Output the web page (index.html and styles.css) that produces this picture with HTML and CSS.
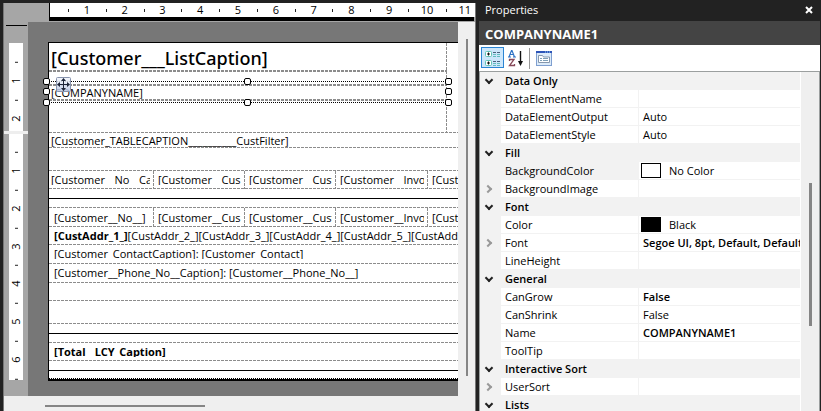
FILE: index.html
```html
<!DOCTYPE html>
<html lang="en">
<head>
<meta charset="utf-8">
<title>Report Designer</title>
<link rel="stylesheet" href="styles.css">
</head>
<body>
<main class="designer">
  <div class="ruler-top">
    <div class="ruler-scale">
      <span>1</span><span>2</span><span>3</span><span>4</span><span>5</span><span>6</span><span>7</span><span>8</span><span>9</span><span>10</span><span>11</span>
    </div>
  </div>
  <div class="workspace">
    <div class="ruler-side">
      <div class="side-scale side-header"><span>1</span><span>2</span></div>
      <div class="side-split"></div>
      <div class="side-scale side-body"><span>1</span><span>2</span><span>3</span><span>4</span><span>5</span><span>6</span><span></span></div>
    </div>
    <div class="canvas">
      <div class="page">
        <section class="page-header">
          <div class="header-area">
            <h1 class="title">[Customer___ListCaption]</h1>
            <div class="selected">
              <span class="text">[COMPANYNAME]</span>
              <i class="handle top left"></i><i class="handle top center"></i><i class="handle top right"></i>
              <i class="handle middle left"></i><i class="handle middle right"></i>
              <i class="handle bottom left"></i><i class="handle bottom center"></i><i class="handle bottom right"></i>
              <svg class="move" viewBox="0 0 15 15"><defs><linearGradient id="mg" x2="0" y2="1"><stop offset="0" stop-color="#f4f7fd"/><stop offset="1" stop-color="#b9c6e4"/></linearGradient></defs><rect x=".5" y=".5" width="14" height="14" rx="1" fill="url(#mg)" fill-opacity=".85" stroke="#8793ad"/><path d="M7.500 2v11M2 7.500h11" stroke="#1c2438"/><path d="M7.500 1 10 4H5zM7.500 14 10 11H5zM1 7.500 4 5v5zM14 7.500 11 5v5z" fill="#1c2438"/></svg>
            </div>
          </div>
        </section>
        <section class="page-body">
          <div class="band band-filter">[Customer_TABLECAPTION__________CustFilter]</div>
          <div class="band tall"></div>
          <div class="band cells captions">
            <div><span>[Customer__No__Ca</span></div><div><span>[Customer__Cus</span></div><div><span>[Customer__Cust</span></div><div><span>[Customer__Invo</span></div><div><span>[Customer</span></div>
          </div>
          <div class="band rule"><hr></div>
          <div class="band cells details">
            <div><span>[Customer__No__]</span></div><div><span>[Customer__Cus</span></div><div><span>[Customer__Cust</span></div><div><span>[Customer__Invo</span></div><div><span>[Customer</span></div>
          </div>
          <div class="band line short"><b>[CustAddr_1_]</b>[CustAddr_2_][CustAddr_3_][CustAddr_4_][CustAddr_5_][CustAddr_6_]</div>
          <div class="band line"><span class="clip">[Customer_ContactCaption]: [Customer_Contact]</span></div>
          <div class="band line">[Customer__Phone_No__Caption]: [Customer__Phone_No__]</div>
          <div class="band short"></div>
          <div class="band tall"></div>
          <div class="band rule"><hr></div>
          <div class="band line short"><b class="clip">[Total__LCY_Caption]</b></div>
          <div class="band rule last"><hr></div>
        </section>
      </div>
    </div>
    <div class="scroll-y"><div class="thumb"></div></div>
  </div>
  <div class="scroll-x"><div class="thumb"></div></div>
</main>

<aside class="properties">
  <header class="panel-title">
    <span>Properties</span>
    <button class="close" aria-label="Close"><svg viewBox="0 0 8 8"><path d="M1 1l6 6M7 1L1 7" stroke="#fff" stroke-width="2"/></svg></button>
  </header>
  <h2 class="object-name">COMPANYNAME1</h2>
  <div class="toolbar">
    <button class="tool active" aria-label="Categorized">
      <svg viewBox="0 0 18 18"><g fill="#fff" stroke="#62c4b4"><rect x="1.500" y="2.500" width="6" height="5" rx="1"/><rect x="1.500" y="11.500" width="6" height="5" rx="1"/></g><path d="M3 5h3M4.500 3.500v3M3 14h3M4.500 12.500v3" stroke="#111"/><path d="M9 3.500h3M13 3.500h3M9 12.500h3M13 12.500h3" stroke="#48617c"/><path d="M9 5.500h3M13 5.500h3M9 7.500h3M13 7.500h3M9 14.500h3M13 14.500h3M9 16.500h3M13 16.500h3" stroke="#62bcc0"/></svg>
    </button>
    <button class="tool" aria-label="Alphabetical">
      <svg viewBox="0 0 18 18"><path d="M2 8 4.500 1.500H5L7.500 8M3 5.500h4M1 8h3M6 8h3" fill="none" stroke="#2e72c4" stroke-width="1.200"/><path d="M2.500 12V10.500H7L2.500 16.500H7.500V15" fill="none" stroke="#874a5a" stroke-width="1.300"/><path d="M13.500 2v11" stroke="#111" stroke-width="1.400"/><path d="M11 12h5L13.500 17z" fill="#111"/></svg>
    </button>
    <span class="divider"></span>
    <button class="tool pages" aria-label="Property Pages">
      <svg viewBox="0 0 18 18"><rect x="1.500" y="2.500" width="15" height="14" fill="#dcebf9" stroke="#7f9fd0"/><path d="M1 3h16" stroke="#2d55b8" stroke-width="2"/><path d="M10 3h1M12 3h1M14 3h1" stroke="#9fd4f5"/><path d="M3.500 13.500v-7h4l1 1.500h6v5.500z" fill="#fff" stroke="#8597ad"/><path d="M5 9.500h2M8 9.500h5M5 11.500h2M8 11.500h5" stroke="#7d9fb8"/></svg>
    </button>
  </div>
  <div class="grid-wrap">
    <div class="grid-view">
    <table class="grid">
      <colgroup><col class="c-gutter"><col class="c-name"><col></colgroup>
      <tbody>
        <tr class="cat"><td><button aria-label="Collapse" class="chev"></button></td><th colspan="2">Data Only</th></tr>
        <tr><td></td><th>DataElementName</th><td></td></tr>
        <tr><td></td><th>DataElementOutput</th><td>Auto</td></tr>
        <tr><td></td><th>DataElementStyle</th><td>Auto</td></tr>
        <tr class="cat"><td><button aria-label="Collapse" class="chev"></button></td><th colspan="2">Fill</th></tr>
        <tr class="current"><td></td><th>BackgroundColor</th><td><div class="color"><i class="swatch"></i>No Color</div></td></tr>
        <tr><td><button aria-label="Expand" class="chev closed"></button></td><th>BackgroundImage</th><td></td></tr>
        <tr class="cat"><td><button aria-label="Collapse" class="chev"></button></td><th colspan="2">Font</th></tr>
        <tr><td></td><th>Color</th><td><div class="color"><i class="swatch black"></i>Black</div></td></tr>
        <tr><td><button aria-label="Expand" class="chev closed"></button></td><th>Font</th><td><b>Segoe UI, 8pt, Default, Default,</b></td></tr>
        <tr><td></td><th>LineHeight</th><td></td></tr>
        <tr class="cat"><td><button aria-label="Collapse" class="chev"></button></td><th colspan="2">General</th></tr>
        <tr><td></td><th>CanGrow</th><td><b>False</b></td></tr>
        <tr><td></td><th>CanShrink</th><td>False</td></tr>
        <tr><td></td><th>Name</th><td><b>COMPANYNAME1</b></td></tr>
        <tr><td></td><th>ToolTip</th><td></td></tr>
        <tr class="cat"><td><button aria-label="Collapse" class="chev"></button></td><th colspan="2">Interactive Sort</th></tr>
        <tr><td><button aria-label="Expand" class="chev closed"></button></td><th>UserSort</th><td></td></tr>
        <tr class="cat"><td><button aria-label="Collapse" class="chev"></button></td><th colspan="2">Lists</th></tr>
      </tbody>
    </table>
    </div>
    <div class="scroll-grid"><div class="thumb"></div></div>
  </div>
</aside>
</body>
</html>
```
FILE: styles.css
```css
:root {
  --dash-h: repeating-linear-gradient(90deg, #8c8c8c 0 3px, #fff 3px 4px);
  --dash-v: repeating-linear-gradient(180deg, #8c8c8c 0 3px, #fff 3px 4px);
  --dots: repeating-linear-gradient(90deg, #000 0 1px, #fff 1px 2px);
}
* { box-sizing: border-box; }
body {
  margin: 0;
  height: 100vh;
  display: flex;
  overflow: hidden;
  background: #222;
  color: #000;
  font: 11px/16px "Open Sans", "Noto Sans", sans-serif;
}
button { padding: 0; border: 0; background: none; }
svg { display: block; }

/* Designer */
.designer {
  flex: 1;
  min-width: 0;
  display: flex;
  flex-direction: column;
  margin: 3px 0 0 3px;
  border-left: 1px solid #777;
  border-right: 1px solid #777;
  background: #a6a6a6;
}
.ruler-top { height: 19px; padding-left: 46px; overflow: hidden; }
.ruler-scale {
  height: 14px;
  padding-left: 18px;
  display: flex;
  background: #fff;
  box-shadow: -1px 0 #000, -1px 4px #000, 0 4px #a6a6a6;
  line-height: 14px;
}
.ruler-scale span {
  flex: none;
  width: 1cm;
  text-align: center;
  background: linear-gradient(#222, #222) 0 6px / 1px 3px no-repeat;
}
.workspace { flex: 1; min-height: 0; display: flex; }
.ruler-side { width: 24px; overflow: hidden; }
.ruler-side::before {
  content: "";
  display: block;
  height: 21px;
  margin: 0 1px 0 2px;
  background: linear-gradient(#000, #000) 0 3px / 100% 1px no-repeat;
}
.side-scale {
  margin: 0 5px;
  padding-top: 19px;
  background: #fff;
  overflow: hidden;
}
.side-header { height: 88px; }
.side-split { height: 3px; background: #eee; }
.side-body { height: 246px; padding-top: 18px; }
.side-scale span {
  display: block;
  width: 14px;
  height: 1cm;
  line-height: 14px;
  writing-mode: vertical-rl;
  transform: rotate(180deg);
  text-align: center;
  background: linear-gradient(#222, #222) 5px 100% / 3px 1px no-repeat;
}
.canvas {
  flex: 1;
  min-width: 0;
  padding: 20px 0 0 20px;
  background: #777;
  overflow: hidden;
}
.page {
  width: 640px;
  border: solid #000;
  border-width: 1px 0 0 1px;
  background: #fff;
}
.page-header { height: 90px; background: var(--dash-h) bottom / 100% 1px no-repeat; }
.header-area {
  width: 398px;
  height: 89px;
  background: var(--dash-v) right / 1px 100% no-repeat;
}
.title {
  margin: 0 0 12px;
  height: 29px;
  padding-left: 2px;
  font-family: "Noto Sans", "Open Sans", sans-serif;
  font-size: 18px;
  font-weight: 500;
  line-height: 30px;
  background: var(--dash-h) bottom / 100% 2px no-repeat;
}
.selected {
  position: relative;
  height: 17px;
  padding-left: 2px;
  line-height: 17px;
  background: var(--dash-h) top / 100% 2px no-repeat, var(--dash-h) bottom / 100% 2px no-repeat;
}
.selected::before, .selected::after {
  content: "";
  position: absolute;
  left: 0;
  right: 0;
  height: 1px;
  background: var(--dots);
}
.selected::before { top: -3px; }
.selected::after { bottom: -2px; }
.handle {
  position: absolute;
  z-index: 1;
  width: 7px;
  height: 7px;
  border: 1px solid #000;
  border-radius: 2px;
  background: #fff;
}
.handle.left { left: -6px; }
.handle.center { left: calc(50% - 4px); }
.handle.right { right: -5px; }
.handle.top { top: -6px; }
.handle.middle { top: 4px; }
.handle.bottom { bottom: -5px; }
.move { position: absolute; left: 7px; top: -7px; width: 15px; height: 15px; }

.page-body {
  border-bottom: 2px solid #000;
}
.band {
  height: 19px;
  overflow: hidden;
  white-space: nowrap;
  background: var(--dash-h) bottom / 100% 1px no-repeat;
}
.band.short { height: 18px; }
.band.tall { height: 23px; }
.band-filter { height: 15px; padding-left: 2px; }
.line { padding-left: 5px; line-height: 18px; }
.clip { display: block; height: 14px; overflow: hidden; }
.cells { display: grid; grid-template-columns: 105px 91px 91px 92px 91px; }
.cells div { padding: 0 4px; background: var(--dash-v) right / 1px 100% no-repeat; }
.cells div:first-child { padding-left: 5px; }
.cells span { display: block; overflow: hidden; line-height: 19px; }
.band.captions { height: 18px; }
.cells.captions div:first-child { padding-left: 2px; }
.captions span { height: 14px; line-height: 18px; }
.rule { padding-top: 9px; }
.rule hr { margin: 0; height: 1px; border: 0; background: #000; }
.band.last { height: 18px; background: var(--dots) bottom / 100% 1px no-repeat; }

.thumb { background: #858585; }
.scroll-y { width: 17px; padding: 17px 7px 20px 8px; background: #efefef; }
.scroll-y .thumb { height: 100%; }
.scroll-x { height: 15px; padding: 9px 270px 0 41px; background: #efefef; }
.scroll-x .thumb { height: 2px; }

/* Properties */
.properties {
  width: 345px;
  padding: 0 1px 0 3px;
  display: flex;
  flex-direction: column;
  overflow: hidden;
}
.panel-title {
  flex: none;
  height: 21px;
  padding: 0 7px 2px 6px;
  display: flex;
  align-items: center;
  justify-content: space-between;
  color: #fff;
}
.close svg { width: 8px; height: 8px; }
.object-name {
  flex: none;
  margin: 0;
  height: 24px;
  padding-left: 6px;
  background: #444;
  color: #fff;
  font-size: 13px;
  line-height: 26px;
}
.toolbar {
  flex: none;
  height: 26px;
  padding: 2px;
  display: flex;
  background: #fff;
}
.tool { width: 23px; height: 21px; display: grid; place-items: center; }
.tool svg { width: 18px; height: 18px; }
.tool.active { border: 1px solid #2b84d3; background: #cce6fb; }
.divider { width: 1px; height: 21px; margin: 1px 2px 0; background: #999; }
.grid-wrap {
  flex: 1;
  min-height: 0;
  display: flex;
  border: solid #9b9f9f;
  border-width: 1px 1px 0;
  background: #f2f2f2;
  overflow: hidden;
}
.grid-view { flex: 1; min-width: 0; }
.grid {
  width: 100%;
  table-layout: fixed;
  border-spacing: 0;
}
.c-gutter { width: 21px; }
.c-name { width: 138px; }
.grid td, .grid th {
  height: 18px;
  padding: 0 0 0 4px;
  border-bottom: 1px solid #f2f2f2;
  background: #fff;
  font-weight: 400;
  text-align: left;
  line-height: 17px;
  white-space: nowrap;
  overflow: hidden;
}
.grid th { border-right: 1px solid #f2f2f2; }
.grid td:first-child, .grid .cat th, .grid .current th { background: #f2f2f2; }
.grid td:first-child { padding-left: 3px; }
.grid .cat th { font-weight: 600; }
.grid b { font-weight: 600; }
.chev {
  display: block;
  width: 6px;
  height: 6px;
  margin: 0 0 2px 3px;
  border: solid #222;
  border-width: 0 2px 2px 0;
  transform: rotate(45deg);
}
.chev.closed { margin: 0 0 0 2px; border-color: #999; transform: rotate(-45deg); }
.color { display: flex; align-items: center; gap: 8px; height: 17px; }
.swatch {
  width: 20px;
  height: 15px;
  margin-left: -2px;
  border: 1px solid #000;
}
.swatch.black { background: #000; }
.scroll-grid {
  width: 19px;
  padding: 111px 7px 0 8px;
  border-left: 1px solid #fff;
  background: #efefef;
}
.scroll-grid .thumb { height: 143px; }
```
